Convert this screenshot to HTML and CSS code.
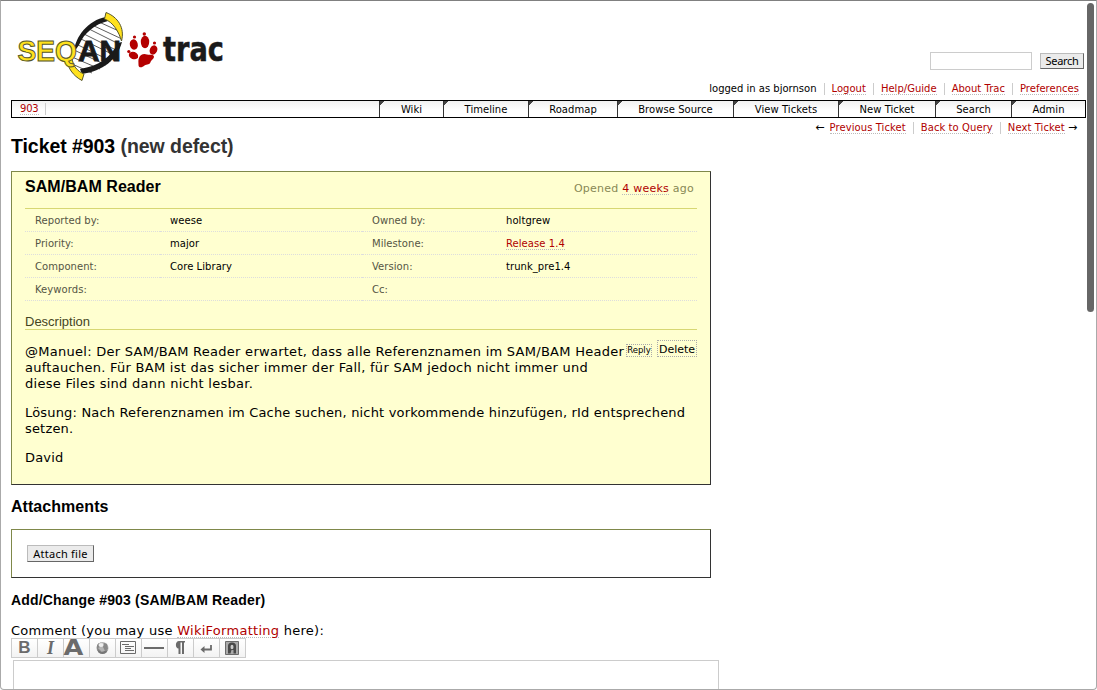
FILE: index.html
```html
<!DOCTYPE html>
<html lang="en">
<head>
<meta charset="utf-8">
<title>#903 (SAM/BAM Reader) – SeqAn</title>
<link rel="stylesheet" href="styles.css">
</head>
<body>
<div class="window">
  <header class="banner">
    <svg class="logo" width="222" height="76" viewBox="14 8 222 76" role="img" aria-label="SeqAn trac">
      <path d="M74 52 C77 38 90 22 106 19 L121 38 C120 53 105 69 84 74 L70 65 Z" fill="#fff"/>
      <g stroke="#333" stroke-width=".8">
        <path d="M99 22L121 32M92 25L122 39M87 28L121 45M82 33L118 51M79 38L116 56M76 44L111 61M74 50L106 65M72 57L100 69M70 63L92 73"/>
      </g>
      <path d="M74 52 C75 37 88 20 106 17 L108 21 C95 24 84 33 79 45 Z" fill="#1a1a1a"/>
      <path d="M82 74 C103 71 117 60 122 42 L118 43 C111 57 99 66 80 69 Z" fill="#1a1a1a"/>
      <path d="M106 12.500 C118 17 125 28 121.500 41 C119 32 113 22 104.500 19 Z" fill="#ffe11d" stroke="#55552a"/>
      <path d="M67 59 C67 67 73 76 82 80.500 L84 74 C77 71 73 66 72 58 Z" fill="#ffe11d" stroke="#55552a"/>
      <text class="logo-seq" x="17.500" y="61" textLength="59.500" lengthAdjust="spacingAndGlyphs">SEQ</text>
      <text class="logo-an" x="78" y="61" textLength="43" lengthAdjust="spacingAndGlyphs">AN</text>
      <g fill="#b40000">
        <path d="M139 58 C140 54.500 144 53 147 54.500 C150 55 154 54 154 57 C154 59 151 60 150.500 62 C150 65 147 64 144.500 65.500 C142 68 138.500 68 138.500 65 C138.500 62 138 60 139 58Z"/>
        <ellipse cx="133.800" cy="44.500" rx="4" ry="5.200" transform="rotate(-12 133.800 44.500)"/>
        <ellipse cx="145" cy="42" rx="4.200" ry="6.200"/>
        <ellipse cx="153.500" cy="50" rx="3.700" ry="4.800" transform="rotate(25 153.500 50)"/>
        <ellipse cx="133.500" cy="55.500" rx="4.800" ry="3.600" transform="rotate(20 133.500 55.500)"/>
        <circle cx="134.500" cy="37" r="1.600"/><circle cx="144.300" cy="34" r="1.700"/><circle cx="154.500" cy="43" r="1.600"/><circle cx="128.800" cy="51.500" r="1.600"/>
      </g>
      <text class="logo-trac" x="163" y="61" textLength="61" lengthAdjust="spacingAndGlyphs">trac</text>
    </svg>
    <form class="search"><input type="text" class="search-box" aria-label="Search"><button type="button" class="button search-btn">Search</button></form>
  </header>
  <ul class="links metanav">
    <li><span class="t-user">logged in as bjornson</span></li><li><a>Logout</a></li><li><a>Help/Guide</a></li><li><a>About Trac</a></li><li><a>Preferences</a></li>
  </ul>
  <nav class="mainnav">
    <span class="crumb"><a>903</a></span>
    <span class="tab wiki">Wiki</span><span class="tab timeline">Timeline</span><span class="tab roadmap">Roadmap</span><span class="tab browse">Browse Source</span><span class="tab tickets">View Tickets</span><span class="tab new">New Ticket</span><span class="tab find">Search</span><span class="tab admin">Admin</span>
  </nav>
  <ul class="links ctxtnav">
    <li><span class="arrow">←</span> <a>Previous Ticket</a></li><li><a>Back to Query</a></li><li><a>Next Ticket</a> <span class="arrow">→</span></li>
  </ul>
  <h1>Ticket #903 <span class="status">(new defect)</span></h1>
  <section class="ticket">
    <div class="ticket-head"><h2>SAM/BAM Reader</h2><p class="date">Opened <a>4 weeks</a> ago</p></div>
    <div class="props">
      <span class="label">Reported by:</span><span>weese</span><span class="label">Owned by:</span><span>holtgrew</span>
      <span class="label">Priority:</span><span>major</span><span class="label">Milestone:</span><span><a>Release 1.4</a></span>
      <span class="label">Component:</span><span>Core Library</span><span class="label">Version:</span><span>trunk_pre1.4</span>
      <span class="label">Keywords:</span><span></span><span class="label">Cc:</span><span></span>
    </div>
    <h3>Description</h3>
    <div class="description">
      <div class="actions"><button type="button" class="reply">Reply</button><button type="button" class="delete">Delete</button></div>
      <p>@Manuel: Der SAM/BAM Reader erwartet, dass alle Referenznamen im SAM/BAM Header<br>auftauchen. Für BAM ist das sicher immer der Fall, für SAM jedoch nicht immer und<br>diese Files sind dann nicht lesbar.</p>
      <p class="tight">Lösung: Nach Referenznamen im Cache suchen, nicht vorkommende hinzufügen, rId entsprechend<br>setzen.</p>
      <p class="tight">David</p>
    </div>
  </section>
  <h2 class="attach-title">Attachments</h2>
  <section class="attachments"><button type="button" class="button attach-btn">Attach file</button></section>
  <h3 class="change-title">Add/Change #903 (SAM/BAM Reader)</h3>
  <label class="comment-label">Comment (you may use <a>WikiFormatting</a> here):</label>
  <div class="toolbar">
    <span class="tool"><b class="bold">B</b></span>
    <span class="tool"><i class="italic">I</i></span>
    <span class="tool"><b class="heading">A</b></span>
    <span class="tool"><svg width="25" height="18"><circle cx="12.500" cy="9" r="6" fill="#b5b5b5"/><path d="M7 6q2-3 5-2l-2 4-2 1 3 3-1 2q-4-2-3-8zM14 4l3 1 1 5-3 2-2-4z" fill="#888"/><path d="M7.500 11q4 3 7 1l3-1q-1 4-5 4-4 0-5-4z" fill="#777"/><ellipse cx="11" cy="6" rx="2.500" ry="2" fill="#eee"/></svg></span>
    <span class="tool"><svg width="25" height="18"><path d="M4.500 2.500h15v12h-15zM6 5.500h7M9 7.500h9M9 9.500h6M9 11.500h9" fill="none" stroke="#6b6b6b"/></svg></span>
    <span class="tool"><svg width="25" height="18"><path d="M2 9h20" stroke="#6b6b6b" stroke-width="2"/></svg></span>
    <span class="tool"><svg width="25" height="18"><path d="M17 2v1.500h-1V15h-2V3.500h-1.500V15h-2V9.500C7 9.500 7 2 11 2z" fill="#6b6b6b"/></svg></span>
    <span class="tool"><svg width="25" height="18"><path d="M17 6v4.500H8" fill="none" stroke="#6b6b6b" stroke-width="1.800"/><path d="M10.500 7v7l-4-3.500z" fill="#6b6b6b"/></svg></span>
    <span class="tool"><svg width="25" height="18"><path d="M5.500 2.500h13v13h-13z" fill="#aaa" stroke="#6b6b6b"/><path d="M8 14.500V7q0-3.500 4-3.500T16 7v7.500h-2.500V11h-2l-1 3.500z" fill="#484848"/><ellipse cx="12" cy="8" rx="1.500" ry="2.300" fill="#ccc"/></svg></span>
  </div>
  <div class="comment-box"></div>
  <div class="scrollbar"></div>
</div>
</body>
</html>
```
FILE: styles.css
```css
* { box-sizing: border-box; }
body { margin: 0; background: #fff; color: #000; font-family: Verdana, "DejaVu Sans", sans-serif; font-size: 13px; overflow: hidden; }
.window { position: relative; width: 1097px; height: 690px; padding: 7px 10px 0; border: 1px solid #aaa; border-top-color: #808080; border-radius: 0 0 4px 4px; overflow: hidden; }
a { color: #b00000; border-bottom: 1px dotted #bbb; }
h1, h2, h3, p, ul { margin: 0; padding: 0; }
h1, h2, h3 { font-family: Arial, "Liberation Sans", sans-serif; }
.banner { display: flex; justify-content: space-between; height: 73px; padding-left: 3px; }
.logo { flex: none; }
.logo-seq, .logo-an, .logo-trac { font-family: "Open Sans", sans-serif; font-weight: 700; font-size: 31px; fill: #1a1a1a; stroke: #1a1a1a; stroke-width: .8px; }
.logo-seq, .logo-an { font-family: "Liberation Sans", sans-serif; font-size: 30px; }
.logo-seq { fill: #ffe11d; stroke: #55552a; stroke-width: 1px; }
.logo-trac { font-family: "DejaVu Sans", sans-serif; font-size: 33px; stroke-width: .5px; }
.search { display: flex; align-items: flex-start; gap: 8px; padding: 44px 2px 0 0; }
.search-box { width: 102px; height: 18px; border: 1px solid #ccc; padding: 0; }
.button { font: 11px/14px "Lucida Grande", "Noto Sans", sans-serif; letter-spacing: .25px; padding: 0; background: #ebebeb; border: 1px solid; border-color: #bbb #666 #666 #bbb; white-space: nowrap; }
.search-btn { width: 44px; height: 16px; margin-top: 1px; letter-spacing: -.3px; }
.links { display: flex; justify-content: flex-end; list-style: none; font-size: 10px; line-height: 12px; white-space: nowrap; }
.links li { padding: 0 7px; border-left: 1px solid #ccc; height: 12px; }
.links li:first-child { border-left: 0; }
.links a { display: inline-block; height: 12px; letter-spacing: .02px; }
.links li:last-child { padding-right: 8px; }
.metanav { padding-top: 2px; height: 19px; margin-right: -1px; }
.mainnav { display: flex; width: 1075px; height: 18px; border: 1px solid #000; background: linear-gradient(#f0f0f0, #fff 60%); font-size: 10px; line-height: 18px; }
.crumb { flex: none; width: 367px; padding-left: 8px; line-height: 13px; }
.crumb a { display: inline-block; height: 13px; margin-top: 1px; letter-spacing: -.2px; }
.crumb::after { content: ""; display: inline-block; height: 12px; border-left: 1px solid #ccc; margin: 2px 0 0 6px; vertical-align: top; }
.tab { flex: none; height: 16px; border-left: 1px solid #333; text-align: center; background: linear-gradient(135deg, #444 3px, transparent 3.5px); white-space: nowrap; letter-spacing: .05px; }
.wiki { width: 64px; } .timeline { width: 85px; } .roadmap { width: 89px; } .browse { width: 116px; }
.tickets { width: 105px; } .new { width: 97px; } .find { width: 76px; } .admin { width: 74px; }
.ctxtnav { padding-top: 4px; height: 17px; margin-right: -1px; }
.ctxtnav a { letter-spacing: .08px; }
.arrow { display: inline-block; width: 11px; font-size: 11px; line-height: 10px; }
h1 { font-size: 19.500px; line-height: 22px; letter-spacing: -.06px; }
.status { color: #333; }
.ticket { width: 700px; height: 314px; margin-top: 14px; padding: 5px 13px 0; background: #ffffd0; border: 1px solid #333; border-top-color: #7f884a; border-left-color: #7f884a; }
.ticket-head { display: flex; justify-content: space-between; height: 31px; }
h2 { font-size: 16px; line-height: 20px; letter-spacing: .05px; }
.date { color: #885; font-size: 11px; line-height: 13px; padding: 5px 3px 0 0; letter-spacing: .24px; }
.date a { display: inline-block; height: 13px; }
.props { display: grid; grid-template-columns: 135px 202px 134px 201px; grid-auto-rows: 23px; border-top: 1px solid #d7d773; font-size: 10px; line-height: 21px; letter-spacing: .06px; }
.props > span { border-bottom: 1px dotted #ddd; padding: 1px 0 0 10px; white-space: nowrap; }
.props a { display: inline-block; height: 12px; line-height: 12px; }
.label { color: #554; }
.ticket h3 { margin-top: 13px; height: 16px; font-size: 13px; line-height: 16px; font-weight: 400; color: #444422; border-bottom: 1px solid #d7d773; }
.description { position: relative; padding-top: 14px; }
.description p { line-height: 16px; margin-bottom: 13px; white-space: nowrap; letter-spacing: .27px; }
.description .tight { letter-spacing: .175px; }
.actions { position: absolute; right: 0; top: 10px; display: flex; gap: 5px; align-items: flex-end; }
.actions button { background: none; border: 1px dotted #aaa; padding: 0; font-family: Verdana, "DejaVu Sans", sans-serif; }
.reply { width: 26px; height: 13px; font-size: 8.500px; line-height: 11px; letter-spacing: 0; }
.actions .delete { width: 40px; height: 17px; font-size: 11px; line-height: 15px; padding-top: 1px; }
.attach-title { margin-top: 12px; }
.attachments { width: 700px; height: 49px; margin-top: 12px; padding: 15px; border: 1px solid #333; border-top-color: #7f884a; border-left-color: #7f884a; display: flex; }
.attach-btn { width: 67px; height: 17px; }
.change-title { margin-top: 14px; font-size: 14px; line-height: 17px; letter-spacing: .17px; }
.comment-label { display: block; margin-top: 14px; height: 15px; line-height: 16px; white-space: nowrap; letter-spacing: .27px; }
.comment-label a { display: inline-block; height: 15px; }
.toolbar { display: flex; width: 235px; height: 20px; border: 1px solid #ccc; background: linear-gradient(#fff, #f3f3f3); }
.tool { flex: none; width: 26px; height: 18px; border-right: 1px solid #ccc; color: #6b6b6b; text-align: center; line-height: 18px; }
.tool:last-child { border-right: 0; width: 25px; }
.tool svg { display: block; }
.bold { font: bold 17px/18px "Liberation Sans", sans-serif; }
.italic { font: italic bold 18px/18px "Liberation Serif", serif; }
.heading { display: block; font: bold 21px/18px "DejaVu Sans", sans-serif; transform: translateX(-3px) scaleX(1.22); }
.comment-box { width: 706px; height: 60px; margin: 2px 0 0 2px; border: 1px solid #ccc; }
.scrollbar { position: absolute; right: 2px; top: 2px; width: 7px; height: 309px; border-radius: 4px; background: #666; }
```
